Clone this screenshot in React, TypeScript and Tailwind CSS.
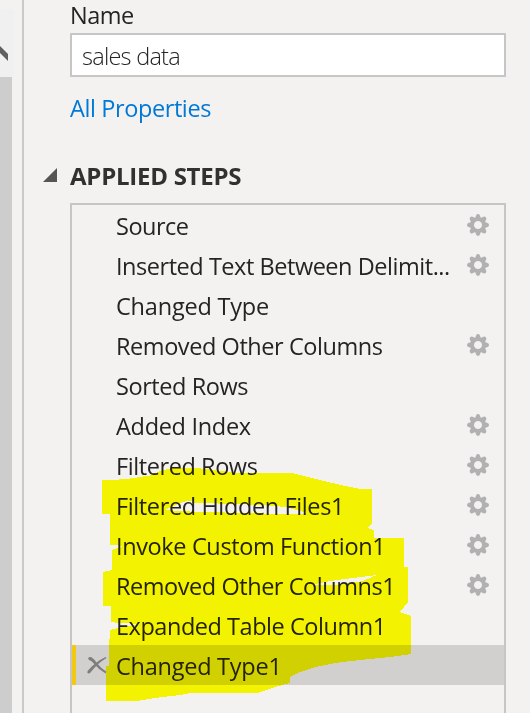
type Step = { name: string; gear?: boolean; selected?: boolean; tracking: string };

const steps: Step[] = [
  { name: "Source", gear: true, tracking: "tracking-[-0.5px]" },
  { name: "Inserted Text Between Delimit...", gear: true, tracking: "tracking-[-0.46px]" },
  { name: "Changed Type", tracking: "tracking-[-0.2px]" },
  { name: "Removed Other Columns", gear: true, tracking: "tracking-[-0.43px]" },
  { name: "Sorted Rows", tracking: "tracking-[-0.42px]" },
  { name: "Added Index", gear: true, tracking: "tracking-[-0.3px]" },
  { name: "Filtered Rows", gear: true, tracking: "tracking-[-0.42px]" },
  { name: "Filtered Hidden Files1", gear: true, tracking: "tracking-[-0.38px]" },
  { name: "Invoke Custom Function1", gear: true, tracking: "tracking-[-0.37px]" },
  { name: "Removed Other Columns1", gear: true, tracking: "tracking-[-0.45px]" },
  { name: "Expanded Table Column1", tracking: "tracking-[-0.46px]" },
  { name: "Changed Type1", selected: true, tracking: "tracking-[-0.25px]" },
];

function Gear() {
  return (
    <svg className="size-[22px] shrink-0" viewBox="-11 -11 22 22">
      <g fill="#b1b1b1">
        {[0, 45, 90, 135, 180, 225, 270, 315].map((a) => (
          <path key={a} transform={`rotate(${a})`} d="M-3.2-6.2L-1.9-9.6Q-1.4-11 0-11Q1.4-11 1.9-9.6L3.2-6.2Z" />
        ))}
      </g>
      <circle r="5.8" fill="none" stroke="#b1b1b1" strokeWidth="3.5" />
    </svg>
  );
}

function StepRow({ step }: { step: Step }) {
  return (
    <div
      className={
        "flex h-10 items-center pr-[15px] " +
        (step.selected ? "border-l-4 border-[#f2c811] bg-[#d1d0ce] pl-[11px]" : "pl-[15px]")
      }
    >
      <div className="w-[29px] shrink-0">
        {step.selected && (
          <svg className="h-[18px] w-5" viewBox="0 0 20 18" fill="#7e7e7d">
            <path d="M1.200 2.200Q2 0.300 4.500 1.300Q7.500 3.500 9.500 6.500Q14 12.500 19.200 15.500L18.600 17.600Q12 14 7.500 8.300Q4.500 4.500 1.600 3.800Z" />
            <path d="M18.500 1L19.500 1.900Q10 7.500 3.500 16.500Q2 18.200 0.400 17L0.600 15Q8 6 18.500 1Z" />
          </svg>
        )}
      </div>
      <div className={"h-10 flex-1 whitespace-nowrap text-[23.5px] leading-[42px] " + step.tracking}>{step.name}</div>
      {step.gear && <Gear />}
    </div>
  );
}

function Highlight() {
  return (
    <svg
      className="pointer-events-none absolute left-0 top-0 h-[713px] w-[530px] mix-blend-multiply"
      viewBox="0 0 530 713"
      shapeRendering="crispEdges"
    >
      <path
        fill="#ffff00"
        fillRule="evenodd"
        d="M102 480H113L130 478.500L150 475.500L160 471L174 467.500H192L205 469L220 471L240 473H292L300 475L312 478L328 482L350 487L360 489H372V524L367 528L374 530V538H404V567H408V602L400 612L411 616V654L390 657L360 660L335 663L315 667L300 672L290 677V683L275 687L258 693H191L180 695L155 698L137 701H106V666H109V649L110 630L118 628L142 624L118 623L111 622V606H103V572L112 570V550L117 548L122 546.500L116 545H110V514H102Z
        M165 510L172 507L180 503L187 501L194 501V503L206 503L230 504L265 505L285 507L297 510L308 513L300 514H278L250 513L200 512L180 511Z
        M313 584.500L330 581L353 578L377 575L363 581L337 585L320 585.500Z"
      />
    </svg>
  );
}

export default function App() {
  return (
    <div className="relative flex h-[713px] w-[530px] overflow-hidden bg-[#f3f2f1] font-['Open_Sans',sans-serif] text-[#252423]">
      <div className="flex w-[14px] shrink-0 flex-col pt-[9px]">
        <div className="h-[68px] shrink-0 bg-[#f0f0f0]">
          <svg className="h-[68px] w-2" viewBox="0 9 8 68">
            <path d="M0 46L8 54V61L0 53Z" fill="#5f605f" />
          </svg>
        </div>
        <div className="w-3 flex-1 bg-[#cdcdcd]" />
      </div>
      <div className="ml-2 w-0.5 shrink-0 bg-[#cac9c8]" />
      <main className="flex w-[482px] flex-col pl-[46px]">
        <div className="h-[33px] shrink-0 text-[23.5px] leading-[30px] tracking-[-0.5px]">Name</div>
        <div className="h-11 w-[436px] shrink-0 border-2 border-[#c8c6c4] bg-white pl-2.5 text-[23.5px] font-light leading-[43px] tracking-[-0.75px]">
          sales data
        </div>
        <div className="h-[63px] shrink-0 pt-[11px] text-[23.5px] leading-[41px] tracking-[-0.4px] text-[#0078d7]">
          All Properties
        </div>
        <div className="-ml-[27px] flex h-[63px] shrink-0 items-center pt-[9px]">
          <svg className="mb-0.5 mr-[13px] size-[14px]" viewBox="0 0 14 14">
            <path d="M14 0V14H0Z" fill="#555" />
          </svg>
          <h2 className="text-[24px] font-bold leading-10 tracking-[-0.25px] text-[#323130]">APPLIED STEPS</h2>
        </div>
        <div className="h-[520px] w-[436px] shrink-0 border-2 border-[#c8c6c4]">
          {steps.map((step) => (
            <StepRow key={step.name} step={step} />
          ))}
        </div>
      </main>
      <Highlight />
    </div>
  );
}
